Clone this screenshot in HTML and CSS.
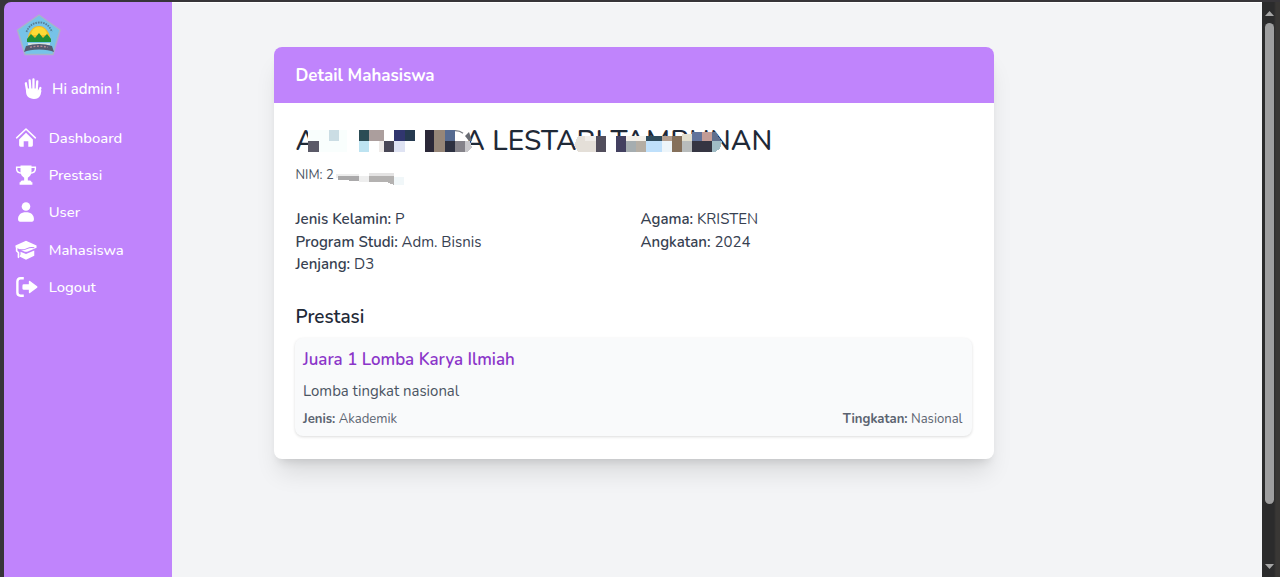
FILE: index.html
```html
<!DOCTYPE html>
<html lang="id">
<head>
<meta charset="utf-8">
<title>Detail Mahasiswa</title>
<link rel="stylesheet" href="styles.css">
</head>
<body>
<div class="window">
  <aside class="sidebar">
    <svg class="logo" viewBox="0 0 46 44">
      <path d="M23 2 44 17 37 41.500H9L1.500 17Z" fill="#76c3e8" stroke="#a9b3c9" stroke-width="1.500" stroke-linejoin="round"/>
      <path d="M10.500 19Q14 10 23 9.500T36 19" fill="none" stroke="#587e96" stroke-width="1.800" stroke-dasharray="1.600 1"/>
      <path d="M11.500 28a11.500 15 0 0 1 23 0Z" fill="#f5bd24"/>
      <path d="M15 22a8 8 0 0 1 16 0Z" fill="#ffda35"/>
      <path d="M11 29v-3l4-5 4 4 4-5 4 5 4-4 4 5v3Z" fill="#208f38"/>
      <path d="M12 30h22v2H12z" fill="#d5e2e1"/>
      <path d="M10 33q13-4 26 0l2 6q-5-2.500-15-2.500T8 39Z" fill="#54596f"/>
      <path d="M14 34.200q9-2 18 0" fill="none" stroke="#b78c93" stroke-width="1.300" stroke-dasharray="2 1.500"/>
    </svg>
    <div class="greeting">
      <svg class="hand" viewBox="0 0 20 24"><g fill="none" stroke="#fff" stroke-width="2.400" stroke-linecap="round"><path d="M3 6.500 4.500 15M7 3.500 7.800 14M11 2.500V14M15 4.500 14.300 15M18.300 11.500 17 15"/></g><path d="M3.200 12h12.300v3l1-2 3 1-1 4.500c-1 3-3.500 4.500-7 4.500-5 0-8.300-3-8.300-7.500Z" fill="#fff"/></svg>
      <span>Hi admin !</span>
    </div>
    <nav class="menu">
      <a class="item"><svg class="icon" viewBox="0 0 24 24" fill="#fff"><path d="M12 6.300 19.500 13.500V20q0 1.500-1.500 1.500H14.500V15.500h-5v6H6Q4.500 21.500 4.500 20v-6.500Z"/><path d="M1.800 11.800 12 2.200l10.200 9.600" fill="none" stroke="#fff" stroke-width="1.700" stroke-linecap="round" stroke-linejoin="round"/></svg><span>Dashboard</span></a>
      <a class="item"><svg class="icon" viewBox="0 0 24 24" fill="#fff"><path d="M6 1.500h12v6.500c0 3.500-1.600 5.500-4 6.900V18h2.200q1.800 0 1.800 1.800h1V22.500H5v-2.700h1Q6 18 7.800 18H10v-3.100C7.600 13.500 6 11.500 6 8Z"/><path d="M7 3.500H1.800v2C1.800 8.500 4 10 8 10M17 3.500h5.200v2c0 3-2.200 4.500-6.200 4.500" fill="none" stroke="#fff" stroke-width="1.600"/></svg><span>Prestasi</span></a>
      <a class="item"><svg class="icon" viewBox="0 0 24 24" fill="#fff"><circle cx="12" cy="6" r="4.700"/><path d="M3.300 20c0-5 3.200-7.800 8.700-7.800s8.700 2.800 8.700 7.800q0 2.500-2 2.500H5.300q-2 0-2-2.500Z"/></svg><span>User</span></a>
      <a class="item"><svg class="icon" viewBox="0 0 24 24" fill="#fff"><path d="M12 2 23.500 7v2.500L14 13.500q-2 .8-4 0L.5 9V7Z"/><path d="M6 14l6 2.300 9-3.800v5.800L12 22.500l-7-3.500 1-2Z"/><path d="M1.800 9v4l2 2v5" fill="none" stroke="#fff" stroke-width="1.800" stroke-linecap="round"/><path d="M5 11.500q4 1 8-1t8-1" fill="none" stroke="#c084fc" stroke-width="1.100"/></svg><span>Mahasiswa</span></a>
      <a class="item logout"><svg class="icon" viewBox="0 0 24 24" fill="#fff"><path d="M8.500 2.500H5Q1.500 2.500 1.500 6v12q0 3.500 3.500 3.500h3.500" fill="none" stroke="#fff" stroke-width="2.600"/><path d="M8.500 9H14V6.200q0-1.500 1.300-.7l7.700 5.700q1 .8 0 1.600l-7.700 5.700q-1.300.8-1.300-.7V15H8.500q-1.500 0-1.500-1.500v-3Q7 9 8.500 9Z"/></svg><span>Logout</span></a>
    </nav>
  </aside>
  <main class="content">
    <article class="card">
      <header class="card-head">Detail Mahasiswa</header>
      <div class="card-body">
        <div class="identity">
          <h1 class="name"><span>A</span><span class="surname">A LESTARI TAMBUNAN</span></h1>
          <p class="nim">NIM: 2</p>
          <svg class="mosaic" viewBox="280 115 520 80" shape-rendering="crispEdges">
            <path fill="#f9fefd" d="M308 130h39v22h-39z"/>
            <path fill="#5b5a68" d="M308 141h11v11h-11z"/>
            <path fill="#cbdde4" d="M329 130h10v11h-10z"/>
            <path fill="#2c4c55" d="M359 130h10v11h-10z"/>
            <path fill="#ab9e9d" d="M369 130h15v11h-15z"/>
            <path fill="#31366f" d="M394 130h11v11h-11z"/>
            <path fill="#263a50" d="M405 130h10v11h-10z"/>
            <path fill="#bde3f1" d="M359 141h10v11h-10z"/>
            <path fill="#eeeae8" d="M379 141h5v11h-5z"/>
            <path fill="#494756" d="M384 141h10v11h-10z"/>
            <path fill="#dfe3f3" d="M394 141h11v11h-11z"/>
            <path fill="#2b2838" d="M425 130h9v22h-9z"/>
            <path fill="#968678" d="M434 130h11v22h-11z"/>
            <path fill="#566b91" d="M445 130h10v11h-10z"/>
            <path fill="#2c3040" d="M445 141h10v11h-10z"/>
            <path fill="#fff" d="M455 130h10v11h-10z"/>
            <path fill="#85838a" d="M455 141h10v11h-10z"/>
            <path fill="#c9c8cb" d="M465 141h5l2 7-5 4h-2z"/>
            <path fill="none" stroke="#777b82" stroke-width="1.300" shape-rendering="auto" d="M455 130.700q5 0 8 2.500"/>
            <path fill="#686b73" shape-rendering="auto" d="M465 136l4-4 3 9h-3Z"/>
            <path fill="#e4dfd8" d="M578 136h18v16h-18l-4-7z"/>
            <path fill="#f0ede9" d="M585 136h11v5h-11z"/>
            <path fill="#524e5c" d="M596 136h10v16h-10z"/>
            <path fill="#fff" d="M606 136h10v16h-10z"/>
            <path fill="#434060" d="M616 136h10v16h-10z"/>
            <path fill="#f4f0e9" d="M626 136h20v5h-20z"/>
            <path fill="#a5adb0" d="M626 141h10v11h-10z"/>
            <path fill="#b5aea4" d="M636 141h10v11h-10z"/>
            <path fill="#2f4b5c" d="M646 136h16v5h-16z"/>
            <path fill="#bfe0fb" d="M646 141h16v11h-16z"/>
            <path fill="#b39e8f" d="M662 136h10v5h-10z"/>
            <path fill="#edf5fa" d="M662 141h10v11h-10z"/>
            <path fill="#85705b" d="M672 136h10v16h-10z"/>
            <path fill="#e2dfcf" d="M682 134h10v7h-10z"/>
            <path fill="#b8bcbc" d="M682 141h10v11h-10z"/>
            <path fill="#61739b" d="M692 132h10v9h-10z"/>
            <path fill="#c39c96" d="M702 132h10v9h-10z"/>
            <path fill="#60708e" d="M712 132h4l5 9h-9z"/>
            <path fill="#353542" d="M692 141h20v11h-20z"/>
            <path fill="#a0bcc5" d="M712 141h10l-2 8-5 3h-3z"/>
            <path fill="#ededed" d="M336 174h23v4h-23z"/>
            <path fill="#aaa9aa" d="M338 176h21v5l-21-1z"/>
            <path fill="#eee" d="M359 176h10v6h-10z"/>
            <path fill="#e4e3e3" d="M369 173h25v4h-25z"/>
            <path fill="#b4b2b1" d="M369 176h25v9l-7-3h-18z"/>
            <path fill="#f1f7f9" d="M394 177h10v8h-10z"/>
          </svg>
        </div>
        <section class="facts">
          <p><b>Jenis Kelamin:</b> P</p>
          <p><b>Agama:</b> KRISTEN</p>
          <p><b>Program Studi:</b> Adm. Bisnis</p>
          <p><b>Angkatan:</b> 2024</p>
          <p><b>Jenjang:</b> D3</p>
        </section>
        <h2 class="section-title">Prestasi</h2>
        <section class="award">
          <h3 class="award-title">Juara 1 Lomba Karya Ilmiah</h3>
          <p class="award-text">Lomba tingkat nasional</p>
          <div class="award-meta"><span><b>Jenis:</b> Akademik</span><span><b>Tingkatan:</b> Nasional</span></div>
        </section>
      </div>
    </article>
  </main>
  <div class="scrollbar">
    <svg class="arrow" viewBox="0 0 9 6"><path d="M4.500 0 9 5H0Z"/></svg>
    <div class="thumb"></div>
    <svg class="arrow" viewBox="0 0 9 6"><path d="M0 0h9L4.500 5Z"/></svg>
  </div>
</div>
</body>
</html>
```
FILE: styles.css
```css
* { box-sizing: border-box; }
body { margin: 0; background: #373539; font-family: Nunito, Lato, sans-serif; color: #374151; }
h1, h2, h3, p { margin: 0; font-weight: 400; }
b { font-weight: 600; }
.window { display: flex; height: 577px; padding: 1.500px 0 0 4px; overflow: hidden; }
.sidebar { width: 167.500px; flex: none; background: #c084fc; border-radius: 7px 0 0 0; color: #fff; padding: 11.500px 0 0 11px; font-weight: 500; }
.logo { display: block; width: 46px; height: 44px; margin-left: 1px; }
.greeting { display: flex; align-items: center; gap: 10px; height: 24px; margin: 19.500px 0 0 8px; font-size: 14.900px; }
.hand { width: 19px; height: 23px; }
.menu { display: flex; flex-direction: column; gap: 13.400px; margin-top: 25px; font-size: 14.850px; }
.item { display: flex; align-items: center; gap: 10.700px; height: 24px; }
.icon { width: 22px; height: 22px; margin-right: 1px; }
.logout .icon { width: 24px; height: 22px; margin-right: -1px; }
.content { flex: 1; background: #f3f4f6; border-top: 1px solid #fff; padding: 44px 0 0 102px; }
.card { width: 720px; height: 412px; background: #fff; border-radius: 8px; box-shadow: 0 18px 24px -5px rgba(0,0,0,.11), 0 7px 10px -5px rgba(0,0,0,.12); }
.card-head { height: 56px; padding-left: 22px; line-height: 57px; border-radius: 8px 8px 0 0; background: #c084fc; color: #fff; font-weight: 700; font-size: 16.900px; }
.card-body { padding: 0 22px; }
.identity { position: relative; height: 104.500px; padding-top: 20.500px; }
.name { display: flex; height: 38px; line-height: 37px; font-size: 28px; font-weight: 500; letter-spacing: .12px; color: #1f2937; white-space: nowrap; }
.surname { margin-left: 148px; }
.nim { font-size: 13px; line-height: 29px; color: #4b5563; }
.mosaic { position: absolute; left: -15.500px; top: 12.500px; width: 520px; height: 80px; }
.facts { display: grid; grid-template-columns: 345px 1fr; grid-auto-rows: 22.500px; font-size: 15px; line-height: 24px; }
.section-title { margin-top: 28px; height: 35px; line-height: 28.500px; font-size: 18.900px; font-weight: 600; color: #1f2937; }
.award { height: 98px; margin: 0 0 0 -1px; padding: 8px 9px 0 8.500px; border-radius: 8px; background: #f9fafb; box-shadow: 0 1px 3px rgba(0,0,0,.14); }
.award-title { height: 30px; line-height: 27px; font-size: 16.900px; font-weight: 600; color: #8b35c9; }
.award-text { height: 31px; line-height: 30px; font-size: 14.950px; color: #4b5563; }
.award-meta { display: flex; justify-content: space-between; font-size: 13.100px; line-height: 24.500px; color: #5b6370; }
.award-meta b { font-weight: 700; }
.scrollbar { width: 18px; flex: none; display: flex; flex-direction: column; align-items: center; background: linear-gradient(90deg, #2b2b2c 12px, #393735 14px); padding: 9px 4px 7px 0; }
.arrow { width: 9px; height: 6px; fill: #a6a6a6; flex: none; }
.thumb { width: 9px; height: 481px; margin: 6px 0 auto; border-radius: 5px; background: #9e9e9f; flex: none; }
```
